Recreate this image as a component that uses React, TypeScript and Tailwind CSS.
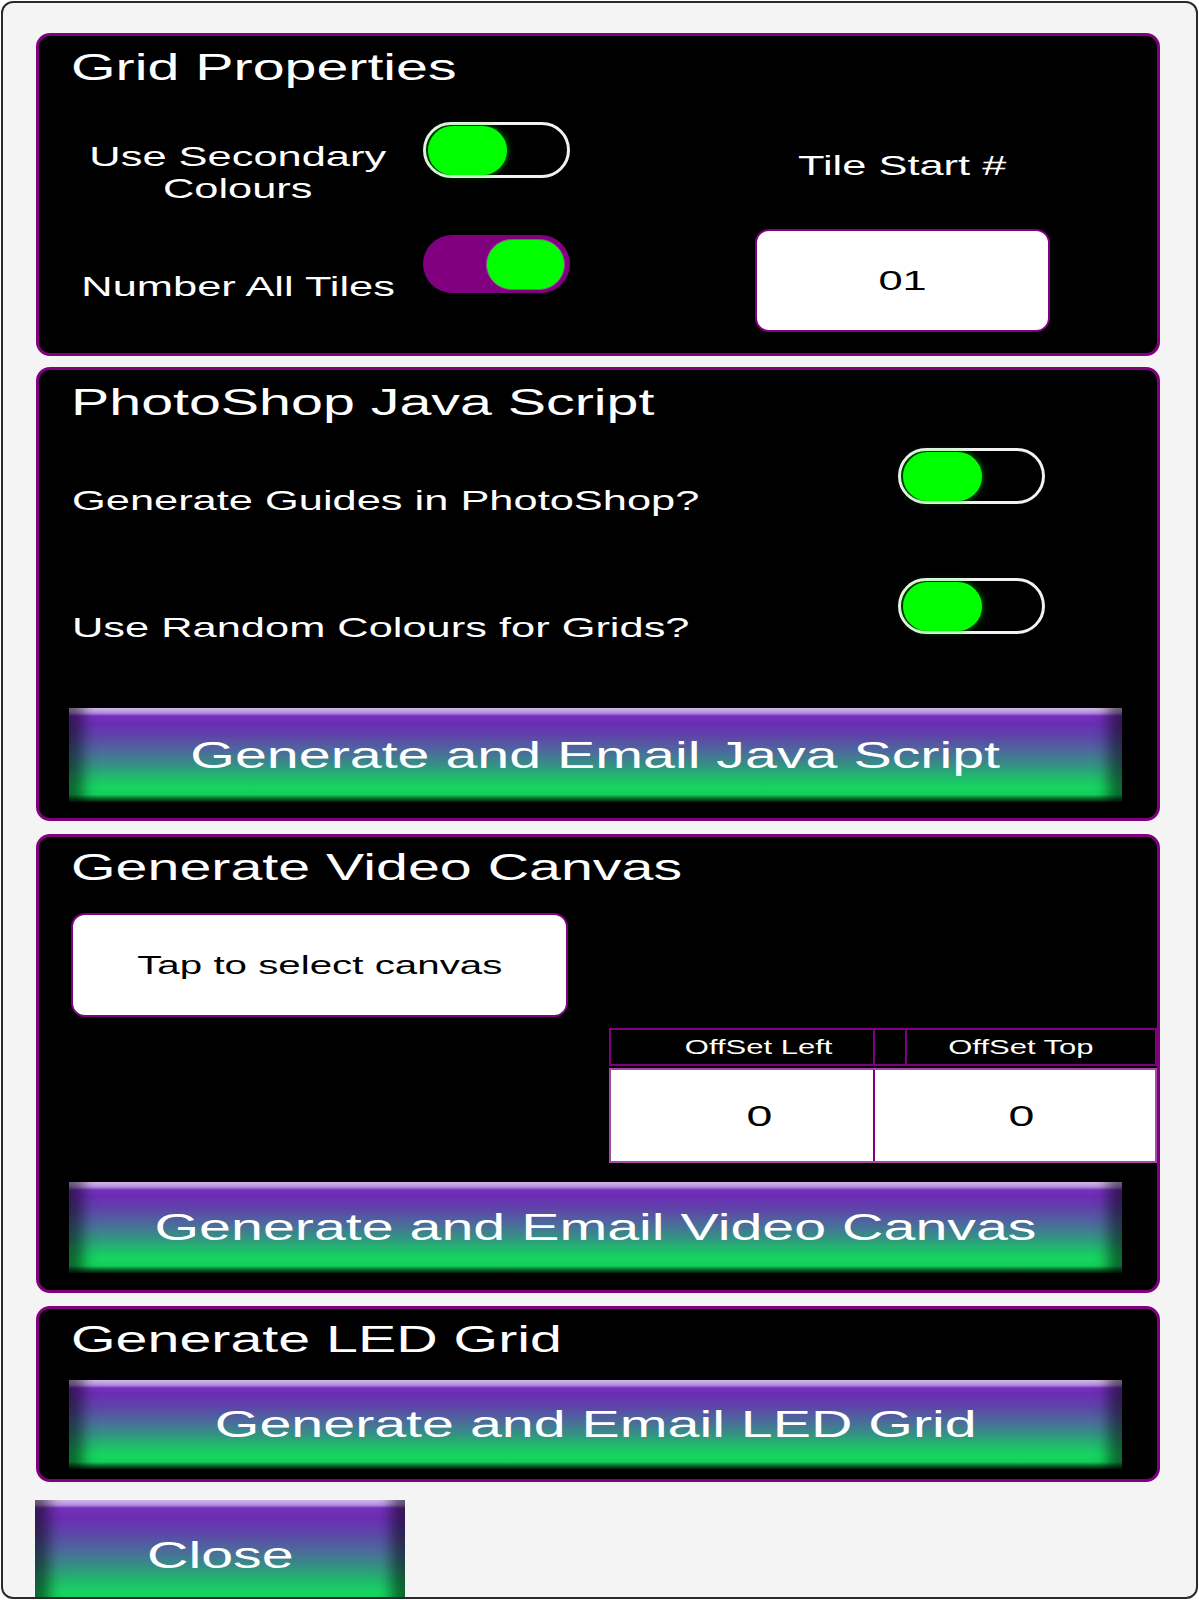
import React from "react";

// text in the reference is stretched sideways, so glyphs get a horizontal scale
function Wide({ children, center }: { children: React.ReactNode; center?: boolean }) {
  return (
    <span
      className={
        center
          ? "inline-block whitespace-nowrap scale-x-[1.55] origin-center"
          : "inline-block whitespace-nowrap scale-x-[1.55] origin-left"
      }
    >
      {children}
    </span>
  );
}

function OutlineToggle() {
  return (
    <div className="flex h-[56px] w-[147px] shrink-0 items-center rounded-full border-[3px] border-[#f2f2f2] bg-black pl-[2px]">
      <div className="h-[49px] w-[79px] rounded-full bg-[#00ff00] shadow-[0_0_7px_rgba(0,255,0,0.55)]" />
    </div>
  );
}

function PurpleToggle() {
  return (
    <div className="flex h-[58px] w-[147px] shrink-0 items-center justify-end rounded-full bg-[#800080] pr-[5px]">
      <div className="h-[51px] w-[79px] rounded-full border border-[#a54aa5] bg-[#00ff00]" />
    </div>
  );
}

function GlossButton({ label, size }: { label: string; size: string }) {
  return (
    <div
      className={
        "flex items-center justify-center bg-[linear-gradient(to_bottom,#dcc4f4_0px,#b58de0_5px,#7331bb_8px,#6b2db4_16%,#5d45a8_30%,#4c6a9c_46%,#358f85_60%,#22b56e_72%,#16d55f_84%,#13cf5b_92%,#0b6f2d_96%,#03220d_100%)] shadow-[inset_24px_0_14px_-10px_rgba(0,0,0,0.5),inset_-24px_0_14px_-10px_rgba(0,0,0,0.5)] text-[37px] leading-none text-white " +
        size
      }
    >
      <Wide center>{label}</Wide>
    </div>
  );
}

function Title({ text, top }: { text: string; top: string }) {
  return (
    <div className={"pl-[32px] text-[37px] leading-[37px] text-white " + top}>
      <Wide>{text}</Wide>
    </div>
  );
}

export default function App() {
  return (
    <div className="ml-px mt-px h-[1598px] w-[1197px] overflow-hidden rounded-[12px] border-2 border-[#2a2a2a] bg-[#f4f4f4] pt-[30px] font-['Liberation_Sans',Arial,sans-serif]">
      {/* Grid Properties */}
      <section className="ml-[33px] h-[323px] w-[1124px] rounded-[14px] border-[3px] border-[#800080] bg-black">
        <Title text="Grid Properties" top="pt-[13px]" />
        <div className="mt-[36px] flex">
          <div className="w-[531px]">
            <div className="flex h-[113px] items-start">
              <div className="ml-[19px] mt-[19px] w-[360px] text-center text-[28px] leading-[32px] text-white">
                <Wide center>
                  Use Secondary
                  <br />
                  Colours
                </Wide>
              </div>
              <div className="ml-[5px]">
                <OutlineToggle />
              </div>
            </div>
            <div className="flex items-start">
              <div className="ml-[19px] mt-[36px] w-[360px] text-center text-[28px] leading-[32px] text-white">
                <Wide center>Number All Tiles</Wide>
              </div>
              <div className="ml-[5px]">
                <PurpleToggle />
              </div>
            </div>
          </div>
          <div className="ml-[185px] flex w-[295px] flex-col items-center">
            <div className="mt-[28px] text-[28px] leading-[32px] text-white">
              <Wide center>Tile Start #</Wide>
            </div>
            <div className="mt-[47px] flex h-[103px] w-[295px] items-center justify-center rounded-[14px] border-2 border-[#800080] bg-white text-[28px] leading-none text-black">
              <Wide center>01</Wide>
            </div>
          </div>
        </div>
      </section>

      {/* PhotoShop Java Script */}
      <section className="ml-[33px] mt-[11px] h-[454px] w-[1124px] rounded-[14px] border-[3px] border-[#800080] bg-black">
        <Title text="PhotoShop Java Script" top="pt-[14px]" />
        <div className="mt-[27px] flex h-[130px] items-start">
          <div className="ml-[33px] mt-[37px] text-[28px] leading-[32px] text-white">
            <Wide>Generate Guides in PhotoShop?</Wide>
          </div>
          <div className="ml-auto mr-[112px]">
            <OutlineToggle />
          </div>
        </div>
        <div className="flex h-[130px] items-start">
          <div className="ml-[33px] mt-[34px] text-[28px] leading-[32px] text-white">
            <Wide>Use Random Colours for Grids?</Wide>
          </div>
          <div className="ml-auto mr-[112px]">
            <OutlineToggle />
          </div>
        </div>
        <div className="ml-[30px] w-[1053px]">
          <GlossButton label="Generate and Email Java Script" size="h-[94px]" />
        </div>
      </section>

      {/* Generate Video Canvas */}
      <section className="ml-[33px] mt-[13px] h-[459px] w-[1124px] rounded-[14px] border-[3px] border-[#800080] bg-black">
        <Title text="Generate Video Canvas" top="pt-[12px]" />
        <div className="ml-[32px] mt-[27px] flex h-[104px] w-[497px] items-center justify-center rounded-[14px] border-2 border-[#800080] bg-white text-[26px] leading-none text-black">
          <Wide center>Tap to select canvas</Wide>
        </div>
        <div className="ml-[570px] mt-[11px] w-[548px]">
          <div className="flex h-[38px] border-2 border-[#800080] bg-black text-[20px] leading-none text-white">
            <div className="flex w-[262px] items-center justify-center pl-[34px]">
              <Wide center>OffSet Left</Wide>
            </div>
            <div className="w-[34px] border-x-2 border-[#800080]" />
            <div className="flex flex-1 items-center justify-center pr-[20px]">
              <Wide center>OffSet Top</Wide>
            </div>
          </div>
          <div className="mt-[2px] flex h-[95px] border-2 border-[#a64ca6] bg-white text-[30px] leading-none text-black">
            <div className="flex w-[262px] items-center justify-center pl-[34px]">
              <Wide center>0</Wide>
            </div>
            <div className="flex flex-1 items-center justify-center border-l-2 border-[#800080] pl-[12px]">
              <Wide center>0</Wide>
            </div>
          </div>
        </div>
        <div className="ml-[30px] mt-[19px] w-[1053px]">
          <GlossButton label="Generate and Email Video Canvas" size="h-[91px]" />
        </div>
      </section>

      {/* Generate LED Grid */}
      <section className="ml-[33px] mt-[13px] h-[176px] w-[1124px] rounded-[14px] border-[3px] border-[#800080] bg-black">
        <Title text="Generate LED Grid" top="pt-[12px]" />
        <div className="ml-[30px] mt-[22px] w-[1053px]">
          <GlossButton label="Generate and Email LED Grid" size="h-[89px]" />
        </div>
      </section>

      <div className="ml-[32px] mt-[18px] w-[370px]">
        <GlossButton label="Close" size="h-[110px]" />
      </div>
    </div>
  );
}
